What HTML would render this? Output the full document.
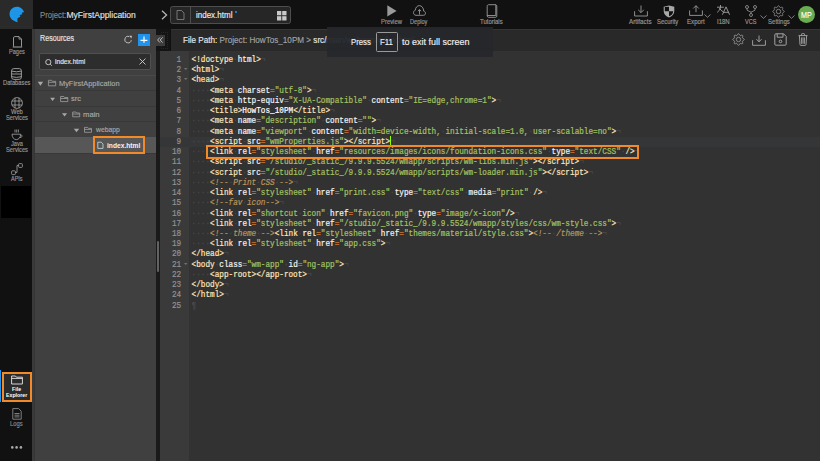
<!DOCTYPE html>
<html><head><meta charset="utf-8">
<style>
*{margin:0;padding:0;box-sizing:border-box}
html,body{width:820px;height:461px;overflow:hidden;background:#111}
body{position:relative;font-family:"Liberation Sans",sans-serif;color:#ccc}
.abs{position:absolute}
svg{position:absolute;overflow:visible}
.tx{position:absolute;white-space:nowrap;line-height:1;transform-origin:0 0;-webkit-text-stroke:0.15px currentColor}
.bd{-webkit-text-stroke:0!important}
.tl{color:#999}
.sl{color:#9a9a9a}
.tr{color:#a9a9a9}
/* editor */
.lines{position:absolute;font-family:"Liberation Mono",monospace;font-size:8.4px;line-height:10.24px;white-space:pre;transform-origin:0 0;-webkit-text-stroke:0.2px currentColor}
#gl{left:0;top:4.3px;width:31.65px;color:#929292;transform:scaleX(0.918)}
#gl div{position:relative;height:10.24px;text-align:right;padding-right:8.5px}
#gl u{position:absolute;left:25.9px;top:3.0px;width:0;height:0;border-left:2px solid transparent;border-right:2px solid transparent;border-top:2.6px solid #707070}
#cl{left:0;top:4.3px;width:690px;color:#fff;transform:scaleX(0.918)}
#cl div{height:10.24px;padding-left:2.84px}
#gl .al{background:#353637}
#cl .al{background:#353637}
#cl i{font-style:normal;color:#4a4a4a}
#cl b{font-weight:normal}
#cl .t{color:#ffe5bb}
#cl .a{color:#f4f4f4}
#cl .k{color:#cc7833}
#cl .q{color:#a5c261}
#cl .c{color:#bc9458;font-style:italic}

</style></head><body>
<!-- TOP BAR -->
<div class="abs" style="left:0;top:0;width:820px;height:28.8px;background:#111"></div>
<div class="abs" style="left:0;top:0;width:33.4px;height:28.8px;background:#2a2a2a"></div><div class="abs" style="left:0;top:25.6px;width:33px;height:1px;border-top:1px dotted #2d2d2d"></div>
<svg style="left:6px;top:4px" width="22" height="22" viewBox="0 0 461 461">
  <path d="M75 215C75 122 148 60 228 60C305 60 362 112 380 178C362 172 340 176 326 188C338 196 344 204 340 214C318 216 296 226 284 242C294 250 300 258 298 266C274 272 254 286 240 306C236 330 236 352 244 380C148 362 75 300 75 215Z" fill="#1f97e9"/><g fill="none" stroke="#1b84cf" stroke-width="9" opacity="0.7"><path d="M150 170Q240 120 330 188"/><path d="M135 225Q210 195 284 242"/><path d="M140 280Q190 265 240 306"/></g>
</svg>
<div class="tx" id="proj" style="left:39.80px;top:10.90px;font-size:8.50px;transform:scaleX(0.910);color:#8a8a8a">Project:</div><div class="tx" id="proj2" style="left:66.40px;top:10.90px;font-size:8.50px;transform:scaleX(1.000);color:#e0e0e0">MyFirstApplication</div>
<svg style="left:161px;top:10px" width="7" height="10" viewBox="0 0 7 10"><path d="M1 0.8L5.6 5L1 9.2" fill="none" stroke="#bbb" stroke-width="1.2"/></svg>
<div class="abs" style="left:170.2px;top:6px;width:120.8px;height:17.8px;background:#262626;border:1px solid #4e4e4e;border-radius:2.5px"></div>
<div class="abs" style="left:189.6px;top:7px;width:1px;height:15.8px;background:#4e4e4e"></div>
<svg style="left:176px;top:10px" width="9" height="10" viewBox="0 0 9 10"><path d="M1 0.5H5.5L8 3V9.5H1Z" fill="none" stroke="#8a8a8a" stroke-width="0.8"/></svg>
<div class="tx" id="tab" style="left:195.90px;top:10.67px;font-size:8.78px;transform:scaleX(0.912);color:#eee">index.html</div>
<div class="abs" style="left:235px;top:10.5px;width:2px;height:2px;border-radius:1px;background:#2196f3"></div>
<svg style="left:277px;top:10.5px" width="10" height="10" viewBox="0 0 10 10"><g fill="#c8c8c8"><rect x="0" y="0" width="4.3" height="4.3"/><rect x="5.2" y="0" width="4.3" height="4.3"/><rect x="0" y="5.2" width="4.3" height="4.3"/><rect x="5.2" y="5.2" width="4.3" height="4.3"/></g></svg>
<!-- preview/deploy/tutorials -->
<svg style="left:386.5px;top:4.5px" width="10" height="12" viewBox="0 0 10 12"><path d="M0.3 0.2L9.6 5.9L0.3 11.6Z" fill="#9a9a9a"/></svg>
<div class="tx tl" id="prev" style="left:380.90px;top:19.00px;font-size:6.50px;transform:scaleX(0.905)">Preview</div>
<svg style="left:412.5px;top:5px" width="13" height="11" viewBox="0 0 13 11"><path d="M3 10.3H10.5C11.8 10.3 12.5 9.3 12.5 8.2C12.5 7.1 11.7 6.2 10.7 6.1C10.6 3 8.7 0.6 6.4 0.6C4.2 0.6 2.5 2.6 2.3 5.2C1.2 5.5 0.5 6.5 0.5 7.7C0.5 9.1 1.6 10.3 3 10.3Z" fill="none" stroke="#9a9a9a" stroke-width="0.9"/><path d="M6.5 9.5V4.6M4.9 6.2L6.5 4.6L8.1 6.2" fill="none" stroke="#9a9a9a" stroke-width="0.9"/></svg>
<div class="tx tl" id="depl" style="left:410.00px;top:19.00px;font-size:6.50px;transform:scaleX(0.858)">Deploy</div>
<svg style="left:486px;top:3.5px" width="12" height="14" viewBox="0 0 12 14"><path d="M1.2 2.2C1.2 1.3 1.8 0.7 2.6 0.7H9.8L10.8 1.8V12.2C10.8 12.8 10.3 13.3 9.7 13.3H2.6C1.8 13.3 1.2 12.7 1.2 12Z" fill="none" stroke="#9a9a9a" stroke-width="0.9"/><path d="M9.8 0.7V11.5H1.2" fill="none" stroke="#9a9a9a" stroke-width="0.9"/></svg>
<div class="tx tl" id="tuto" style="left:480.00px;top:19.00px;font-size:6.50px;transform:scaleX(0.916)">Tutorials</div>
<!-- right toolbar -->
<svg style="left:633.5px;top:4.5px" width="14" height="12" viewBox="0 0 14 12"><path d="M7 0.5V7.6M4.2 4.8L7 7.6L9.8 4.8" fill="none" stroke="#9a9a9a" stroke-width="0.9"/><path d="M0.6 6.2V11H13.4V6.2" fill="none" stroke="#9a9a9a" stroke-width="0.9"/></svg>
<div class="tx tl" id="arti" style="left:628.80px;top:19.00px;font-size:6.50px;transform:scaleX(0.958)">Artifacts</div>
<svg style="left:662.5px;top:4.5px" width="12" height="13" viewBox="0 0 12 13"><path d="M6 0.4L11.3 1.8V6C11.3 9 9 11.4 6 12.5C3 11.4 0.7 9 0.7 6V1.8Z" fill="#a8a8a8"/><path d="M6 1.7V6.2H1.8V1.9L6 1.7ZM6 6.2H10.2C10.1 8.6 8.4 10.5 6 11.3Z" fill="#111"/></svg>
<div class="tx tl" id="secu" style="left:657.00px;top:19.00px;font-size:6.50px;transform:scaleX(0.908)">Security</div>
<svg style="left:689px;top:5px" width="14" height="11" viewBox="0 0 14 11"><path d="M7 7.2V0.7M4.2 3.5L7 0.7L9.8 3.5" fill="none" stroke="#9a9a9a" stroke-width="0.9"/><path d="M0.6 5.4V10.4H13.4V5.4" fill="none" stroke="#9a9a9a" stroke-width="0.9"/></svg>
<svg style="left:704px;top:14px" width="7" height="4" viewBox="0 0 7 4"><path d="M0.5 0.5L3.5 3.3L6.5 0.5" fill="none" stroke="#9a9a9a" stroke-width="0.8"/></svg>
<div class="tx tl" id="expo" style="left:686.80px;top:19.00px;font-size:6.50px;transform:scaleX(0.943)">Export</div>
<svg style="left:712px;top:2px" width="24" height="16" viewBox="0 0 24 16"><g fill="none" stroke="#a4a4a4" stroke-width="0.9"><path d="M5 5.2H11.8M8.5 3V5.2M8.6 5.2Q8 8.6 5.2 10.4M7.4 6.2Q9 8.6 11.2 9.8"/><path d="M10.4 12.7L14 4.9L17.6 12.7M11.5 10.3H16.5"/></g></svg>
<div class="tx tl" id="i18n" style="left:717.00px;top:19.00px;font-size:6.50px;transform:scaleX(0.926)">I18N</div>
<svg style="left:745px;top:4.5px" width="12" height="12" viewBox="0 0 12 12"><g fill="none" stroke="#9a9a9a" stroke-width="0.8"><circle cx="2" cy="2" r="1.5"/><circle cx="10" cy="2" r="1.5"/><circle cx="6" cy="10" r="1.5"/><path d="M2 3.5V5.2L6 7.2V8.5M10 3.5V5.2L6 7.2"/></g></svg>
<svg style="left:759.5px;top:14.5px" width="7" height="4" viewBox="0 0 7 4"><path d="M0.5 0.5L3.5 3.3L6.5 0.5" fill="none" stroke="#9a9a9a" stroke-width="0.8"/></svg>
<div class="tx tl" id="vcs" style="left:745.00px;top:19.00px;font-size:6.50px;transform:scaleX(0.855)">VCS</div>
<svg style="left:772px;top:4.5px" width="13" height="13" viewBox="-6.5 -6.5 13 13"><path d="M0.00 -5.75L0.37 -5.64L0.70 -5.33L0.98 -4.90L1.20 -4.47L1.40 -4.12L1.63 -3.93L1.92 -3.90L2.31 -4.01L2.78 -4.16L3.27 -4.26L3.72 -4.25L4.07 -4.07L4.25 -3.72L4.26 -3.27L4.16 -2.78L4.01 -2.31L3.90 -1.92L3.93 -1.63L4.12 -1.40L4.47 -1.20L4.90 -0.98L5.33 -0.70L5.64 -0.37L5.75 -0.00L5.64 0.37L5.33 0.70L4.90 0.98L4.47 1.20L4.12 1.40L3.93 1.63L3.90 1.92L4.01 2.31L4.16 2.78L4.26 3.27L4.25 3.72L4.07 4.07L3.72 4.25L3.27 4.26L2.78 4.16L2.31 4.01L1.92 3.90L1.63 3.93L1.40 4.12L1.20 4.47L0.98 4.90L0.70 5.33L0.37 5.64L0.00 5.75L-0.37 5.64L-0.70 5.33L-0.98 4.90L-1.20 4.47L-1.40 4.12L-1.63 3.93L-1.92 3.90L-2.31 4.01L-2.78 4.16L-3.27 4.26L-3.72 4.25L-4.07 4.07L-4.25 3.72L-4.26 3.27L-4.16 2.78L-4.01 2.31L-3.90 1.92L-3.93 1.63L-4.12 1.40L-4.47 1.20L-4.90 0.98L-5.33 0.70L-5.64 0.37L-5.75 0.00L-5.64 -0.37L-5.33 -0.70L-4.90 -0.98L-4.47 -1.20L-4.12 -1.40L-3.93 -1.63L-3.90 -1.92L-4.01 -2.31L-4.16 -2.78L-4.26 -3.27L-4.25 -3.72L-4.07 -4.07L-3.72 -4.25L-3.27 -4.26L-2.78 -4.16L-2.31 -4.01L-1.92 -3.90L-1.63 -3.93L-1.40 -4.12L-1.20 -4.47L-0.98 -4.90L-0.70 -5.33L-0.37 -5.64Z" fill="none" stroke="#9a9a9a" stroke-width="0.8" stroke-linejoin="round"/><circle r="2.2" fill="none" stroke="#9a9a9a" stroke-width="0.8"/></svg>
<svg style="left:788px;top:14.5px" width="7" height="4" viewBox="0 0 7 4"><path d="M0.5 0.5L3.5 3.3L6.5 0.5" fill="none" stroke="#9a9a9a" stroke-width="0.8"/></svg>
<div class="tx tl" id="sett" style="left:767.50px;top:19.00px;font-size:6.50px;transform:scaleX(0.928)">Settings</div>
<div class="abs" style="left:798px;top:6.3px;width:16.8px;height:16.8px;border-radius:50%;background:#6aad50"></div>
<div class="tx" id="mp" style="left:800.80px;top:11.73px;font-size:8.23px;transform:scaleX(0.872);color:#fff">MP</div>

<!-- SIDEBAR -->
<div class="abs" style="left:0;top:28.8px;width:32px;height:433px;background:#111"></div>
<svg style="left:12px;top:36px" width="11" height="12" viewBox="0 0 11 12"><path d="M1.5 10.5V1.8C1.5 1.1 2 0.6 2.7 0.6H7L9.5 3.1V10.5" fill="none" stroke="#a6a6a6" stroke-width="0.9"/><path d="M0.8 11H10.2" stroke="#a6a6a6" stroke-width="1"/><path d="M7 0.6V3.1H9.5" fill="none" stroke="#a6a6a6" stroke-width="0.8"/></svg>
<div class="tx sl" id="pages" style="left:8.80px;top:48.60px;font-size:6.50px;transform:scaleX(0.855)">Pages</div>
<svg style="left:11.4px;top:67.6px" width="11" height="12" viewBox="0 0 11 12"><g fill="none" stroke="#a6a6a6" stroke-width="0.9"><rect x="0.6" y="0.6" width="9.8" height="10.8" rx="2.2"/><path d="M0.6 3.1Q5.5 4.5 10.4 3.1M0.6 6H10.4M0.6 8.7Q5.5 10.1 10.4 8.7"/></g></svg>
<div class="tx sl" id="dbs" style="left:2.90px;top:80.40px;font-size:6.50px;transform:scaleX(0.883)">Databases</div>
<svg style="left:11px;top:97px" width="12" height="12" viewBox="0 0 12 12"><g fill="none" stroke="#a6a6a6" stroke-width="0.8"><circle cx="6" cy="6" r="5.4"/><path d="M0.8 4H11.2M0.8 8H11.2M4 0.8V11.2M8 0.8V11.2"/></g></svg>
<div class="tx sl" id="web" style="left:10.90px;top:108.80px;font-size:6.50px;transform:scaleX(0.895)">Web</div>
<div class="tx sl" id="ws" style="left:5.70px;top:115.00px;font-size:6.50px;transform:scaleX(0.880)">Services</div>
<svg style="left:11px;top:129px" width="12" height="12" viewBox="0 0 12 12"><g fill="none" stroke="#a6a6a6" stroke-width="0.8"><path d="M4 0.5V3.5M5.7 0.5V3.5M7.4 0.5V3.5"/><path d="M1 5.2H9.6C9.6 8.6 7.6 10.6 5.3 10.6S1 8.6 1 5.2Z"/><path d="M9.5 6.2H10.5C11.3 6.2 11.3 7.8 10.3 8.2L8.8 8.6"/></g></svg>
<div class="tx sl" id="java" style="left:10.90px;top:141.20px;font-size:6.50px;transform:scaleX(0.864)">Java</div>
<div class="tx sl" id="js" style="left:5.70px;top:147.10px;font-size:6.50px;transform:scaleX(0.880)">Services</div>
<svg style="left:11px;top:163px" width="12" height="12" viewBox="0 0 12 12"><g fill="none" stroke="#a6a6a6" stroke-width="0.8"><rect x="7.6" y="0.6" width="3.8" height="3.8" rx="0.9"/><rect x="0.6" y="7.8" width="3.8" height="3.8" rx="0.9"/><path d="M7.6 2.4H6V9.4H4.4"/></g></svg>
<div class="tx sl" id="apis" style="left:10.90px;top:175.60px;font-size:6.50px;transform:scaleX(0.843)">APIs</div>
<div class="abs" style="left:1.2px;top:186px;width:29.8px;height:32px;background:#000"></div>
<!-- file explorer selected -->
<div class="abs" style="left:0;top:370.2px;width:1.4px;height:31.7px;background:#2196f3"></div>
<div class="abs" style="left:1.9px;top:371.7px;width:30.5px;height:30.2px;border:2px solid #f28a2a;background:#2b2b2b"></div>
<svg style="left:11px;top:375px" width="12" height="10" viewBox="0 0 12 10"><g fill="none" stroke="#e8e8e8" stroke-width="0.9"><path d="M0.6 1H4.4L5.4 2.2H11.4V9H0.6Z"/><path d="M0.6 3.4H11.4"/></g></svg>
<div class="tx bd" id="file" style="left:11.60px;top:386.51px;font-size:5.90px;transform:scaleX(0.892);color:#fff;font-weight:bold">File</div>
<div class="tx bd" id="expl" style="left:5.70px;top:392.71px;font-size:5.90px;transform:scaleX(0.886);color:#fff;font-weight:bold">Explorer</div>
<svg style="left:12px;top:408px" width="10" height="12" viewBox="0 0 10 12"><g fill="none" stroke="#8a8a8a" stroke-width="0.9"><path d="M0.8 0.6H6.6L9.2 3.2V11.2H0.8Z"/><path d="M2.5 5.5H7.5M2.5 7.2H7.5M2.5 8.9H7.5"/></g></svg>
<div class="tx" id="logs" style="left:9.90px;top:421.20px;font-size:6.50px;transform:scaleX(0.896);color:#8a8a8a">Logs</div>
<svg style="left:10.9px;top:445.8px" width="12" height="3" viewBox="0 0 12 3"><g fill="#a8a8b0"><circle cx="1.3" cy="1.4" r="1.3"/><circle cx="5.6" cy="1.4" r="1.3"/><circle cx="9.9" cy="1.4" r="1.3"/></g></svg>

<!-- PANEL -->
<div class="abs" style="left:32px;top:28.8px;width:124px;height:433px;background:#404040"></div>
<div class="abs" style="left:32px;top:28.8px;width:2.5px;height:433px;background:#3a3a3a"></div>
<div class="abs" style="left:34.3px;top:28.8px;width:0.8px;height:433px;background:#363636"></div>
<div class="tx" id="reso" style="left:40.10px;top:33.97px;font-size:8.30px;transform:scaleX(0.861);color:#e6e6e6">Resources</div>
<svg style="left:118px;top:30px" width="20" height="20" viewBox="0 0 20 20"><path d="M13.25 10.2A3.2 3.2 0 1 1 11.2 6.6" fill="none" stroke="#cfcfcf" stroke-width="0.9"/><path d="M11.3 5.7L13.8 5.8L13.4 8.4Z" fill="#cfcfcf"/></svg>
<div class="abs" style="left:137.5px;top:33.9px;width:12.5px;height:12.1px;background:#1f93f0"></div>
<svg style="left:118px;top:30px" width="40" height="20" viewBox="0 0 40 20"><path d="M26 6.5V12.7M22.5 10.4H29.4" stroke="#fff" stroke-width="1.2"/></svg>
<div class="abs" style="left:39.2px;top:53.3px;width:111.8px;height:16.5px;background:#2d2d2d;border:1px solid #505050;border-radius:2px"></div>
<svg style="left:45px;top:58.5px" width="8" height="7" viewBox="0 0 8 7"><circle cx="3.3" cy="3.1" r="2.6" fill="none" stroke="#d0d0d0" stroke-width="0.9"/><path d="M5.1 5L6.8 6.7" stroke="#d0d0d0" stroke-width="0.9"/></svg>
<div class="tx" id="srch" style="left:54.80px;top:57.91px;font-size:7.54px;transform:scaleX(0.880);color:#e6e6e6">index.html</div>
<svg style="left:138.5px;top:57.5px" width="7" height="7" viewBox="0 0 7 7"><path d="M0.5 0.5L6.5 6.5M6.5 0.5L0.5 6.5" stroke="#cfcfcf" stroke-width="0.9"/></svg>
<div class="abs" style="left:35px;top:74.7px;width:121px;height:1px;background:#4a4a4a"></div>
<!-- tree rows -->
<div class="abs" style="left:35px;top:90px;width:121px;height:1px;background:#383838"></div>
<div class="abs" style="left:35px;top:105.6px;width:121px;height:1px;background:#383838"></div>
<div class="abs" style="left:35px;top:121.3px;width:121px;height:1px;background:#383838"></div>
<div class="abs" style="left:35px;top:136.9px;width:121px;height:1px;background:#383838"></div>
<div class="abs" style="left:35px;top:137.4px;width:121px;height:15.2px;background:#575757"></div>
<div class="abs" style="left:35px;top:152.6px;width:121px;height:1px;background:#383838"></div>
<svg style="left:0;top:0" width="160" height="160" viewBox="0 0 160 160"><g fill="#a8a8a8">
<path d="M37.7 81.8H43.2L40.45 85.7Z"/>
<path d="M50.2 97.8H55L52.6 100.9Z"/>
<path d="M62 113.2H67.1L64.55 116.6Z"/>
<path d="M73.8 128.8H79.2L76.5 132.2Z"/>
</g><g fill="none" stroke="#a0a0a0" stroke-width="0.8">
<path d="M48.4 80.3H51.6L52.4 81.3H55.7V85.8H48.4Z M48.4 82.3H55.7"/>
<path d="M60.6 96.5H63.8L64.6 97.5H67.8V101.6H60.6Z M60.6 98.5H67.8"/>
<path d="M72.7 112H75.9L76.7 113H79.7V116.8H72.7Z M72.7 114H79.7"/>
<path d="M84.5 127.4H87.7L88.5 128.4H91.5V132.3H84.5Z M84.5 129.4H91.5"/>
</g>
<path d="M97.8 142.2H101.2L103 144V148.4H97.8Z" fill="none" stroke="#c4dfe6" stroke-width="0.8"/>
</svg>
<div class="tx tr" id="tr1" style="left:58.90px;top:79.83px;font-size:8.00px;transform:scaleX(0.926)">MyFirstApplication</div>
<div class="tx tr" id="tr2" style="left:70.80px;top:95.43px;font-size:8.00px;transform:scaleX(0.938)">src</div>
<div class="tx tr" id="tr3" style="left:82.60px;top:110.63px;font-size:8.00px;transform:scaleX(0.959)">main</div>
<div class="tx tr" id="tr4" style="left:95.75px;top:126.03px;font-size:8.00px;transform:scaleX(0.849)">webapp</div>
<div class="tx bd" id="tr5" style="left:107.00px;top:142.33px;font-size:8.00px;transform:scaleX(0.832);color:#f4f4f4;font-weight:bold">index.html</div>
<div class="abs" style="left:92.9px;top:136px;width:52.3px;height:17.6px;border:2px solid #f28a2a"></div>

<!-- EDITOR -->
<div class="abs" style="left:155.9px;top:28.8px;width:4.2px;height:433px;background:#1a1a1a"></div>
<div class="abs" style="left:155.9px;top:28.8px;width:14.6px;height:21.9px;background:#141414"></div>
<div class="abs" style="left:161px;top:32px;width:7px;height:17.4px;border:1px dotted #262626"></div>
<div class="abs" style="left:155.9px;top:35.1px;width:9.1px;height:10.7px;background:#3c3c3c"></div>
<svg style="left:157.2px;top:37.4px" width="6" height="6" viewBox="0 0 6 6"><path d="M3 0.4L0.6 3L3 5.6M5.6 0.4L3.2 3L5.6 5.6" fill="none" stroke="#c8c8c8" stroke-width="0.9"/></svg>
<div class="abs" style="left:156.7px;top:241.3px;width:2.6px;height:30.6px;background:#626262;border-radius:1px"></div>
<div class="abs" style="left:170.5px;top:28.6px;width:650px;height:22.1px;background:#292929;border-top:1px solid #353535"></div>
<div class="tx" id="path" style="left:182.70px;top:35.75px;font-size:8.80px;transform:scaleX(0.924)"><span style="color:#e8e8e8">File Path: </span><span style="color:#a3a3a3">Project: HowTos_10PM &gt; </span><span style="color:#e8e8e8">src/</span><span style="color:#a3a3a3">main/webapp/index.html</span></div>
<svg style="left:731.5px;top:33px" width="13" height="13" viewBox="-6.5 -6.5 13 13"><path d="M0.00 -5.75L0.37 -5.64L0.70 -5.33L0.98 -4.90L1.20 -4.47L1.40 -4.12L1.63 -3.93L1.92 -3.90L2.31 -4.01L2.78 -4.16L3.27 -4.26L3.72 -4.25L4.07 -4.07L4.25 -3.72L4.26 -3.27L4.16 -2.78L4.01 -2.31L3.90 -1.92L3.93 -1.63L4.12 -1.40L4.47 -1.20L4.90 -0.98L5.33 -0.70L5.64 -0.37L5.75 -0.00L5.64 0.37L5.33 0.70L4.90 0.98L4.47 1.20L4.12 1.40L3.93 1.63L3.90 1.92L4.01 2.31L4.16 2.78L4.26 3.27L4.25 3.72L4.07 4.07L3.72 4.25L3.27 4.26L2.78 4.16L2.31 4.01L1.92 3.90L1.63 3.93L1.40 4.12L1.20 4.47L0.98 4.90L0.70 5.33L0.37 5.64L0.00 5.75L-0.37 5.64L-0.70 5.33L-0.98 4.90L-1.20 4.47L-1.40 4.12L-1.63 3.93L-1.92 3.90L-2.31 4.01L-2.78 4.16L-3.27 4.26L-3.72 4.25L-4.07 4.07L-4.25 3.72L-4.26 3.27L-4.16 2.78L-4.01 2.31L-3.90 1.92L-3.93 1.63L-4.12 1.40L-4.47 1.20L-4.90 0.98L-5.33 0.70L-5.64 0.37L-5.75 0.00L-5.64 -0.37L-5.33 -0.70L-4.90 -0.98L-4.47 -1.20L-4.12 -1.40L-3.93 -1.63L-3.90 -1.92L-4.01 -2.31L-4.16 -2.78L-4.26 -3.27L-4.25 -3.72L-4.07 -4.07L-3.72 -4.25L-3.27 -4.26L-2.78 -4.16L-2.31 -4.01L-1.92 -3.90L-1.63 -3.93L-1.40 -4.12L-1.20 -4.47L-0.98 -4.90L-0.70 -5.33L-0.37 -5.64Z" fill="none" stroke="#a8a8a8" stroke-width="0.8" stroke-linejoin="round"/><circle r="2.2" fill="none" stroke="#9a9a9a" stroke-width="0.8"/></svg>
<svg style="left:752px;top:34.5px" width="14" height="11" viewBox="0 0 14 11"><path d="M7 0.5V6.8M4.4 4.2L7 6.8L9.6 4.2" fill="none" stroke="#a8a8a8" stroke-width="0.9"/><path d="M0.6 5.2V10.3H13.4V5.2" fill="none" stroke="#a8a8a8" stroke-width="0.9"/></svg>
<svg style="left:773.5px;top:33.3px" width="13" height="13" viewBox="0 0 13 13"><g fill="none" stroke="#b0b0b0" stroke-width="0.9"><path d="M0.8 1.8C0.8 1.2 1.2 0.8 1.8 0.8H9.6L12.2 3.4V11.2C12.2 11.8 11.8 12.2 11.2 12.2H1.8C1.2 12.2 0.8 11.8 0.8 11.2Z"/><path d="M3.2 0.8V4.2H9V0.8"/><circle cx="6.5" cy="8.4" r="1.3"/></g></svg>
<svg style="left:798px;top:33px" width="10" height="13" viewBox="0 0 10 13"><g fill="none" stroke="#a8a8a8" stroke-width="0.9"><path d="M0.5 2.6H9.5M3.5 2.6V1.2C3.5 0.8 3.8 0.6 4.2 0.6H5.8C6.2 0.6 6.5 0.8 6.5 1.2V2.6"/><path d="M1.4 2.8L2 11.6C2 12 2.4 12.4 2.8 12.4H7.2C7.6 12.4 8 12 8 11.6L8.6 2.8"/><path d="M3.6 4.4V10.8M5 4.4V10.8M6.4 4.4V10.8"/></g></svg>

<div class="abs" style="left:160.1px;top:50.7px;width:29px;height:411px;background:#3a3a3a"><div class="lines" id="gl"><div>1</div><div>2<u></u></div><div>3<u></u></div><div>4</div><div>5</div><div>6</div><div>7</div><div>8</div><div class="al">9</div><div>10</div><div>11</div><div>12</div><div>13</div><div>14</div><div>15</div><div>16</div><div>17</div><div>18</div><div>19</div><div>20</div><div>21<u></u></div><div>22</div><div>23</div><div>24</div><div>25</div></div></div>
<div class="abs" style="left:189.1px;top:50.7px;width:631px;height:411px;background:#323232"><div class="lines" id="cl"><div><b class="t">&lt;!doctype</b><i>·</i><b class="a">html</b><b class="t">&gt;</b><i class="e">¬</i></div><div><b class="t">&lt;html</b><b class="t">&gt;</b><i class="e">¬</i></div><div><b class="t">&lt;head</b><b class="t">&gt;</b><i class="e">¬</i></div><div><i>·</i><i>·</i><i>·</i><i>·</i><b class="t">&lt;meta</b><i>·</i><b class="a">charset</b><b class="k">=</b><b class="q">"utf-8"</b><b class="t">&gt;</b><i class="e">¬</i></div><div><i>·</i><i>·</i><i>·</i><i>·</i><b class="t">&lt;meta</b><i>·</i><b class="a">http-equiv</b><b class="k">=</b><b class="q">"X-UA-Compatible"</b><i>·</i><b class="a">content</b><b class="k">=</b><b class="q">"IE=edge,chrome=1"</b><b class="t">&gt;</b><i class="e">¬</i></div><div><i>·</i><i>·</i><i>·</i><i>·</i><b class="t">&lt;title</b><b class="t">&gt;</b>HowTos_10PM<b class="t">&lt;/title</b><b class="t">&gt;</b><i class="e">¬</i></div><div><i>·</i><i>·</i><i>·</i><i>·</i><b class="t">&lt;meta</b><i>·</i><b class="a">name</b><b class="k">=</b><b class="q">"description"</b><i>·</i><b class="a">content</b><b class="k">=</b><b class="q">""</b><b class="t">&gt;</b><i class="e">¬</i></div><div><i>·</i><i>·</i><i>·</i><i>·</i><b class="t">&lt;meta</b><i>·</i><b class="a">name</b><b class="k">=</b><b class="q">"viewport"</b><i>·</i><b class="a">content</b><b class="k">=</b><b class="q">"width=device-width,<i>·</i>initial-scale=1.0,<i>·</i>user-scalable=no"</b><b class="t">&gt;</b><i class="e">¬</i></div><div class="al"><i>·</i><i>·</i><i>·</i><i>·</i><b class="t">&lt;script</b><i>·</i><b class="a">src</b><b class="k">=</b><b class="q">"wmProperties.js"</b><b class="t">&gt;</b><b class="t">&lt;/script</b><b class="t">&gt;</b><i class="e">¬</i></div><div><i>·</i><i>·</i><i>·</i><i>·</i><b class="t">&lt;link</b><i>·</i><b class="a">rel</b><b class="k">=</b><b class="q">"stylesheet"</b><i>·</i><b class="a">href</b><b class="k">=</b><b class="q">"resources/images/icons/foundation-icons.css"</b><i>·</i><b class="a">type</b><b class="k">=</b><b class="q">"text/CSS"</b><i>·</i><b class="t">/&gt;</b><i class="e">¬</i></div><div><i>·</i><i>·</i><i>·</i><i>·</i><b class="t">&lt;script</b><i>·</i><b class="a">src</b><b class="k">=</b><b class="q">"/studio/_static_/9.9.9.5524/wmapp/scripts/wm-libs.min.js"</b><b class="t">&gt;</b><b class="t">&lt;/script</b><b class="t">&gt;</b><i class="e">¬</i></div><div><i>·</i><i>·</i><i>·</i><i>·</i><b class="t">&lt;script</b><i>·</i><b class="a">src</b><b class="k">=</b><b class="q">"/studio/_static_/9.9.9.5524/wmapp/scripts/wm-loader.min.js"</b><b class="t">&gt;</b><b class="t">&lt;/script</b><b class="t">&gt;</b><i class="e">¬</i></div><div><i>·</i><i>·</i><i>·</i><i>·</i><b class="c">&lt;!--<i>·</i>Print<i>·</i>CSS<i>·</i>--&gt;</b><i class="e">¬</i></div><div><i>·</i><i>·</i><i>·</i><i>·</i><b class="t">&lt;link</b><i>·</i><b class="a">rel</b><b class="k">=</b><b class="q">"stylesheet"</b><i>·</i><b class="a">href</b><b class="k">=</b><b class="q">"print.css"</b><i>·</i><b class="a">type</b><b class="k">=</b><b class="q">"text/css"</b><i>·</i><b class="a">media</b><b class="k">=</b><b class="q">"print"</b><i>·</i><b class="t">/&gt;</b><i class="e">¬</i></div><div><i>·</i><i>·</i><i>·</i><i>·</i><b class="c">&lt;!--fav<i>·</i>icon--&gt;</b><i class="e">¬</i></div><div><i>·</i><i>·</i><i>·</i><i>·</i><b class="t">&lt;link</b><i>·</i><b class="a">rel</b><b class="k">=</b><b class="q">"shortcut<i>·</i>icon"</b><i>·</i><b class="a">href</b><b class="k">=</b><b class="q">"favicon.png"</b><i>·</i><b class="a">type</b><b class="k">=</b><b class="q">"image/x-icon"</b><b class="t">/&gt;</b><i class="e">¬</i></div><div><i>·</i><i>·</i><i>·</i><i>·</i><b class="t">&lt;link</b><i>·</i><b class="a">rel</b><b class="k">=</b><b class="q">"stylesheet"</b><i>·</i><b class="a">href</b><b class="k">=</b><b class="q">"/studio/_static_/9.9.9.5524/wmapp/styles/css/wm-style.css"</b><b class="t">&gt;</b><i class="e">¬</i></div><div><i>·</i><i>·</i><i>·</i><i>·</i><b class="c">&lt;!--<i>·</i>theme<i>·</i>--&gt;</b><b class="t">&lt;link</b><i>·</i><b class="a">rel</b><b class="k">=</b><b class="q">"stylesheet"</b><i>·</i><b class="a">href</b><b class="k">=</b><b class="q">"themes/material/style.css"</b><b class="t">&gt;</b><b class="c">&lt;!--<i>·</i>/theme<i>·</i>--&gt;</b><i class="e">¬</i></div><div><i>·</i><i>·</i><i>·</i><i>·</i><b class="t">&lt;link</b><i>·</i><b class="a">rel</b><b class="k">=</b><b class="q">"stylesheet"</b><i>·</i><b class="a">href</b><b class="k">=</b><b class="q">"app.css"</b><b class="t">&gt;</b><i class="e">¬</i></div><div><b class="t">&lt;/head</b><b class="t">&gt;</b><i class="e">¬</i></div><div><b class="t">&lt;body</b><i>·</i><b class="a">class</b><b class="k">=</b><b class="q">"wm-app"</b><i>·</i><b class="a">id</b><b class="k">=</b><b class="q">"ng-app"</b><b class="t">&gt;</b><i class="e">¬</i></div><div><i>·</i><i>·</i><i>·</i><i>·</i><b class="t">&lt;app-root</b><b class="t">&gt;</b><b class="t">&lt;/app-root</b><b class="t">&gt;</b><i class="e">¬</i></div><div><b class="t">&lt;/body</b><b class="t">&gt;</b><i class="e">¬</i></div><div><b class="t">&lt;/html</b><b class="t">&gt;</b><i class="e">¬</i></div><div><i>¶</i></div></div></div>
<div class="abs" style="left:390px;top:136px;width:1px;height:9.6px;background:#91ff00"></div>
<div class="abs" style="left:206.2px;top:145px;width:432.5px;height:14px;border:2px solid #f28a2a"></div>

<!-- TOAST -->
<div class="abs" style="left:327px;top:27px;width:166.3px;height:29.6px;background:rgba(37,39,43,0.92)"></div>
<div class="tx" id="pres" style="left:350.90px;top:37.44px;font-size:9.40px;transform:scaleX(0.828);color:#f0f0f0">Press</div>
<div class="abs" style="left:375.7px;top:31.7px;width:22px;height:20.4px;border:1px solid #9a9a9a;border-radius:1.5px"></div>
<div class="tx" id="f11" style="left:379.70px;top:37.44px;font-size:9.40px;transform:scaleX(0.840);color:#f0f0f0">F11</div>
<div class="tx" id="exit" style="left:401.90px;top:37.44px;font-size:9.40px;transform:scaleX(0.960);color:#f0f0f0">to exit full screen</div>
</body></html>
